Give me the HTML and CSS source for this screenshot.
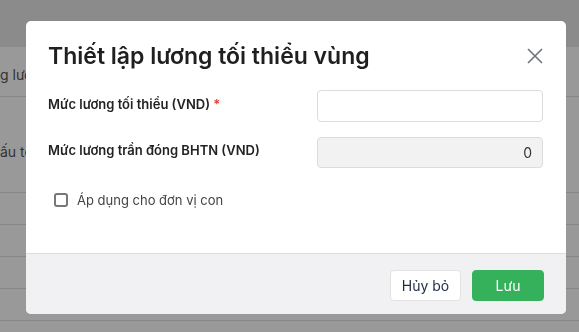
FILE: index.html
```html
<!DOCTYPE html>
<html lang="vi">
<head>
  <meta charset="UTF-8">
  <meta name="viewport" content="width=device-width, initial-scale=1.0">
  <title>Thiết lập lương tối thiểu vùng</title>
  <link rel="stylesheet" href="styles.css">
</head>
<body>

  <!-- Trang phía sau -->
  <div class="page">
    <div class="page-top"></div>
    <div class="page-row row-head">g lương tối thiểu vùng</div>
    <div class="page-row row-tall">ấu tối thiểu đóng bảo hiểm</div>
    <div class="page-row row-small"></div>
    <div class="page-row row-small"></div>
    <div class="page-row row-small"></div>
    <div class="page-row row-small"></div>
  </div>

  <!-- Modal -->
  <div class="overlay">
    <div class="modal">
      <div class="modal-header">
        <h2 class="modal-title">Thiết lập lương tối thiểu vùng</h2>
        <button class="close-btn" aria-label="Đóng">
          <svg width="18" height="18" viewBox="0 0 18 18">
            <path d="M2 2 L16 16 M16 2 L2 16" stroke="#6f737a" stroke-width="1.6" fill="none"/>
          </svg>
        </button>
      </div>

      <div class="modal-body">
        <div class="form-row">
          <label class="form-label" for="minSalary">Mức lương tối thiểu (VND) <span class="required">*</span></label>
          <input class="form-input" type="text" id="minSalary">
        </div>
        <div class="form-row">
          <label class="form-label" for="maxSalary">Mức lương trần đóng BHTN (VND)</label>
          <input class="form-input disabled" type="text" id="maxSalary" value="0" disabled>
        </div>
        <label class="check-row">
          <input type="checkbox">
          <span class="check-box"></span>
          <span>Áp dụng cho đơn vị con</span>
        </label>
      </div>

      <div class="modal-footer">
        <button class="btn btn-cancel">Hủy bỏ</button>
        <button class="btn btn-save">Lưu</button>
      </div>
    </div>
  </div>

</body>
</html>
```

FILE: styles.css
```css
* {
  box-sizing: border-box;
}
body {
  margin: 0;
  font-family: Inter, "Noto Sans", sans-serif;
  background: #fff;
  overflow: hidden;
}
.page {
  width: 100%;
  height: 332px;
}
.page-top {
  height: 47px;
  background: #e8e8e8;
}
.page-row {
  border-bottom: 1px solid #e2e2e2;
  font-size: 14px;
  color: #555;
  white-space: nowrap;
  overflow: hidden;
}
.row-head {
  height: 50px;
  line-height: 56px;
}
.row-tall {
  height: 96px;
  padding-top: 46px;
}
.row-small {
  height: 32px;
}
.overlay {
  position: fixed;
  top: 0;
  left: 0;
  width: 100%;
  height: 100%;
  background: rgba(0, 0, 0, 0.4);
}
.modal {
  margin: 21px 0 0 26px;
  width: 540px;
  background: #fff;
  border-radius: 5px;
  overflow: hidden;
}
.modal-header {
  display: flex;
  align-items: center;
  justify-content: space-between;
  padding: 20px 21px 0 22px;
}
.modal-title {
  margin: 0;
  font-size: 23px;
  line-height: 30px;
  font-weight: 600;
  color: #1f1f1f;
}
.close-btn {
  border: none;
  background: none;
  padding: 0;
  width: 20px;
  height: 20px;
  display: flex;
  align-items: center;
  justify-content: center;
  cursor: pointer;
}
.modal-body {
  padding: 19px 23px 45px 22px;
}
.form-row {
  display: flex;
  align-items: center;
  justify-content: space-between;
  margin-bottom: 15px;
}
.form-label {
  font-size: 13px;
  font-weight: 600;
  color: #222;
  margin-top: -5px;
}
.required {
  color: #e53935;
}
.form-input {
  width: 226px;
  height: 32px;
  border: 1px solid #dcdcdc;
  border-radius: 4px;
  padding: 0 10px;
  font-family: inherit;
  font-size: 14px;
  text-align: right;
  color: #333;
  background: #fff;
}
.form-input.disabled {
  background: #f2f2f2;
  color: #333;
  height: 31px;
}
.check-row {
  display: flex;
  align-items: center;
  margin-top: 24px;
  padding-left: 6px;
  font-size: 13px;
  color: #444;
  cursor: pointer;
}
.check-row input {
  display: none;
}
.check-box {
  width: 14px;
  height: 14px;
  border: 2px solid #777;
  border-radius: 3px;
  margin-right: 9px;
}
.modal-footer {
  display: flex;
  justify-content: flex-end;
  gap: 11px;
  padding: 16px 22px 13px;
  background: #f1f1f3;
  border-top: 1px solid #dcdce2;
}
.btn {
  height: 31px;
  border-radius: 4px;
  font-family: inherit;
  font-size: 14px;
  cursor: pointer;
}
.btn-cancel {
  width: 71px;
  background: #fff;
  border: 1px solid #e2e2e2;
  color: #1f2a44;
}
.btn-save {
  width: 72px;
  background: #34b15a;
  border: 1px solid #34b15a;
  color: #fff;
}
```
